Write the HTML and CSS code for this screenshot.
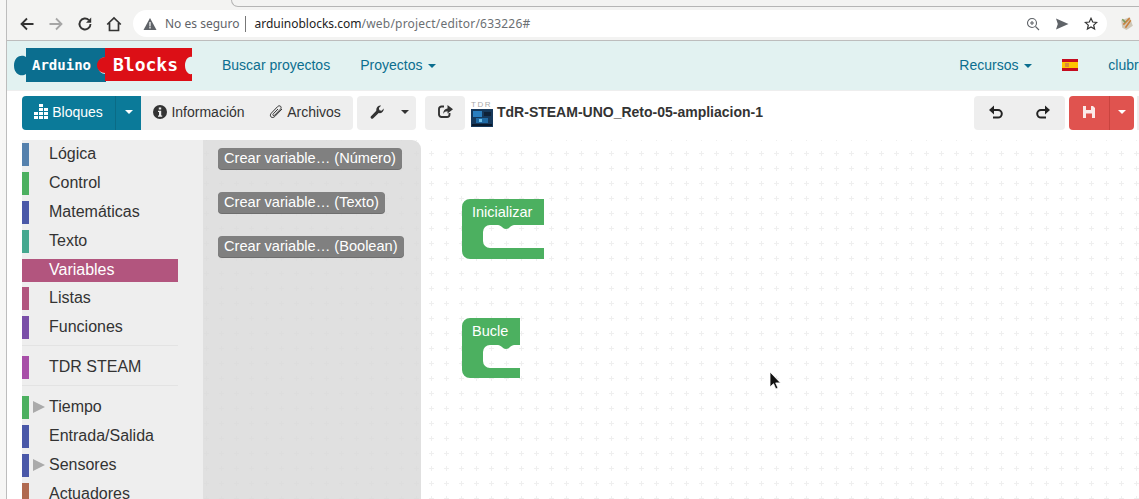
FILE: index.html
```html
<!DOCTYPE html>
<html lang="es">
<head>
    <meta charset="UTF-8">
    <meta name="viewport" content="width=device-width, initial-scale=1.0">
    <title>ArduinoBlocks</title>
    <link rel="stylesheet" href="styles.css">
</head>
<body>
    <div class="window">
        <!-- browser chrome -->
        <div class="tabStrip"><div class="tabEdge"></div></div>
        <div class="browserBar">
            <svg class="chromeIcon" viewBox="0 0 16 16"><path d="M14.500 8H2.500M8 2.500L2.500 8 8 13.500" fill="none" stroke="#333" stroke-width="1.800"/></svg>
            <svg class="chromeIcon" viewBox="0 0 16 16"><path d="M1.500 8h12M8 2.500L13.500 8 8 13.500" fill="none" stroke="#a6a6a6" stroke-width="1.800"/></svg>
            <svg class="chromeIcon" viewBox="0 0 16 16"><path d="M13.500 8a5.500 5.500 0 1 1-1.600-3.900" fill="none" stroke="#333" stroke-width="1.900"/><path d="M14.200 1.500v5.200H9z" fill="#333"/></svg>
            <svg class="chromeIcon" viewBox="0 0 16 16"><path d="M1.200 8.500L8 2l6.800 6.500M3.500 7v7.500h9V7" fill="none" stroke="#333" stroke-width="1.700"/></svg>
            <div class="addressBar">
                <svg class="warnIcon" viewBox="0 0 14 14"><path d="M7 1l6.500 12H.5z" fill="#5f6368"/><path d="M6.400 5h1.200v4.400H6.400zM6.400 10h1.200v1.400H6.400z" fill="#fff"/></svg>
                <span class="secure">No es seguro</span>
                <span class="urlHost">arduinoblocks.com<span class="urlPath">/web/project/editor/633226#</span></span>
                <svg class="omniIcon" viewBox="0 0 14 14"><circle cx="6" cy="6" r="4.500" fill="none" stroke="#5f6368" stroke-width="1.100"/><path d="M9.500 9.500L13 13M4 6h4M6 4v4" stroke="#5f6368" stroke-width="1.100"/></svg>
                <svg class="omniIcon" viewBox="0 0 14 14"><path d="M1 1.500L13.500 7 1 12.500l1.800-5.500z" fill="#5f6368"/></svg>
                <svg class="omniIcon" viewBox="0 0 14 14"><path d="M7 1.300l1.700 3.700 4 .4-3 2.700.9 4L7 10l-3.600 2.100.9-4-3-2.700 4-.4z" fill="none" stroke="#333" stroke-width="1.200"/></svg>
            </div>
            <svg class="extIcon" viewBox="0 0 16 16"><path d="M3 5l8-3 3 8-6 4-4-2z" fill="#cfc7b8"/><path d="M5 9l6-6M7 12l5-7" stroke="#c9803c" stroke-width="1.500"/><path d="M4 4l3 3" stroke="#7a9a5a" stroke-width="1.500"/></svg>
        </div>

        <nav class="navbar">
            <svg class="logo" viewBox="0 0 180 36">
                <path d="M13 1h80v9c-5 0-8 3.500-8 8.500s3 8.500 8 8.500v8H13v-8c-4 3-12 1-12-8.500S9 7 13 10z" fill="#0b6e8f"/>
                <path d="M92 1h87v9c-4-1-7 3.500-7 8.500s3 9.500 7 8.500v7H92v-8c-4 0-8-3-8-7.500s4-8.500 8-8.500z" fill="#dc0f16"/>
                <text class="logoText" x="19" y="23">Arduino</text>
                <text class="logoText big" x="100" y="24">Blocks</text>
            </svg>
            <a class="navLink firstLink">Buscar proyectos</a>
            <a class="navLink">Proyectos <span class="caret"></span></a>
            <a class="navLink recursos">Recursos <span class="caret"></span></a>
            <svg class="flag" viewBox="0 0 16 12"><rect width="16" height="12" fill="#c60b1e"/><rect y="3" width="16" height="6" fill="#ffc400"/><rect x="3" y="4" width="4" height="4" fill="#d98a3a"/></svg>
            <a class="navLink">clubrobotica</a>
        </nav>

        <div class="toolbar">
            <div class="btnGroup">
                <button class="btn primary">
                    <svg class="blockIcon" viewBox="0 0 14 15"><path d="M5 0h4v3H5zM5 4h4v3H5zM0 8h4v3H0zM5 8h4v3H5zM10 8h4v3h-4zM0 12h4v3H0zM5 12h4v3H5zM10 12h4v3h-4zM10 4h4v3h-4z" fill="#fff"/></svg>
                    Bloques
                </button>
                <button class="btn primary splitCaret"><span class="caret"></span></button>
                <button class="btn infoBtn">
                    <svg class="btnIcon" viewBox="0 0 14 14"><circle cx="7" cy="7" r="7" fill="#333"/><path d="M5.800 2.500h2.400v2.100H5.800zM5 5.800h3.200v4.600h1v1.300H5v-1.300h1V7.100H5z" fill="#eee"/></svg>
                    Información
                </button>
                <button class="btn fileBtn">
                    <svg class="btnIcon" viewBox="0 0 14 14"><path d="M13 4L5.800 11.500c-1.200 1.200-2.900 1.300-3.800.4S1.100 9.400 2.300 8.200L8.600 1.600c.9-.9 2.200-1 3-.3s.6 2.100-.3 3L5.700 10.200c-.5.500-1.200.6-1.600.2s-.3-1.100.2-1.600L9 4" fill="none" stroke="#333" stroke-width="1"/></svg>
                    Archivos
                </button>
            </div>
            <div class="btnGroup">
                <button class="btn wrench">
                    <svg class="btnIcon" viewBox="0 0 14 14"><path d="M.8 11.500L6.300 5.700C5.900 3 8 .3 11.200.6L8.900 3l.5 2.200 2.200.5L13.700 3.400c.4 3.300-2.500 5.300-5 4.700L3 13.500c-1.300 1-3.100-.6-2.200-2z" fill="#333"/></svg>
                </button>
                <button class="btn wrenchCaret"><span class="caret"></span></button>
            </div>
            <div class="btnGroup shareGroup">
                <button class="btn share">
                    <svg class="shareIcon" viewBox="0 0 15 13"><path d="M6 1.500H3.500A2.500 2.500 0 0 0 1 4v5.500A2.500 2.500 0 0 0 3.500 12H9a2.500 2.500 0 0 0 2.500-2.500V8" fill="none" stroke="#333" stroke-width="1.900"/><path d="M9.500 0L15 4.300 9.500 8.500V6.300C7.500 6.300 6.200 7 5.200 9c0-3.500 1.800-5.300 4.300-5.500z" fill="#333"/></svg>
                </button>
            </div>
            <div class="projectIcon">
                <span class="projectTdr">TDR</span>
                <svg class="projectPic" viewBox="0 0 22 18"><rect width="22" height="18" fill="#16395c"/><rect x="2" y="2" width="9" height="6" fill="#2a7fc0"/><rect x="13" y="3" width="7" height="4" fill="#0f2238"/><rect x="5" y="9" width="12" height="5" fill="#1f6aa5"/><rect x="8" y="10" width="3" height="3" fill="#6fc0e8"/><rect x="1" y="15" width="20" height="2" fill="#0a1a2c"/></svg>
            </div>
            <b class="projectName">TdR-STEAM-UNO_Reto-05-ampliacion-1</b>
            <div class="btnGroup undoGroup">
                <button class="btn history">
                    <svg class="historyIcon" viewBox="0 0 15 14"><path d="M3 5h6a3.800 3.800 0 0 1 0 7.600H4" fill="none" stroke="#222" stroke-width="2"/><path d="M5 .5v9L0 5z" fill="#222"/></svg>
                </button>
                <button class="btn history">
                    <svg class="historyIcon" viewBox="0 0 15 14"><path d="M12 5H6a3.800 3.800 0 0 0 0 7.600h5" fill="none" stroke="#222" stroke-width="2"/><path d="M10 .5v9L15 5z" fill="#222"/></svg>
                </button>
            </div>
            <div class="btnGroup">
                <button class="btn danger">
                    <svg class="btnIcon" viewBox="0 0 14 14"><path d="M1 1h10l2 2v10H1z" fill="#fbe9e8"/><path d="M4 1h5v4H4zM4 8.500h6V13H4z" fill="#e0534f"/></svg>
                </button>
                <button class="btn danger splitDanger"><span class="caret"></span></button>
            </div>
            <div class="sliver"></div>
        </div>

        <div class="editor">
            <ul class="tree">
                <li class="cat"><i class="swatch blue"></i>Lógica</li>
                <li class="cat"><i class="swatch green"></i>Control</li>
                <li class="cat"><i class="swatch indigo"></i>Matemáticas</li>
                <li class="cat"><i class="swatch teal"></i>Texto</li>
                <li class="cat selected"><i class="swatch rose"></i>Variables</li>
                <li class="cat"><i class="swatch rose"></i>Listas</li>
                <li class="cat"><i class="swatch violet"></i>Funciones</li>
                <li class="sep"></li>
                <li class="cat"><i class="swatch magenta"></i>TDR STEAM</li>
                <li class="sep"></li>
                <li class="cat"><i class="swatch green"></i><i class="arrow"></i>Tiempo</li>
                <li class="cat"><i class="swatch indigo"></i>Entrada/Salida</li>
                <li class="cat"><i class="swatch indigo"></i><i class="arrow"></i>Sensores</li>
                <li class="cat"><i class="swatch brown"></i>Actuadores</li>
            </ul>
            <div class="canvas">
                <svg class="blocks" viewBox="203 140 936 359">
                    <defs>
                        <pattern id="dots" x="444" y="196" width="15" height="15" patternUnits="userSpaceOnUse">
                            <path d="M0 2.500h5M2.500 0v5" stroke="#efefef" stroke-width="1"/>
                        </pattern>
                    </defs>
                    <rect x="203" y="140" width="936" height="359" fill="url(#dots)"/>
                    <path class="block" d="M470 199H544V225H514c-3 0-5 4-8 4s-5-4-8-4H490a7 7 0 0 0-7 7v9a7 7 0 0 0 7 7H544V259H470a8 8 0 0 1-8-8V207a8 8 0 0 1 8-8z"/>
                    <text class="blockText" x="472" y="217">Inicializar</text>
                    <path class="block" d="M470 318H520V345H514c-3 0-5 4-8 4s-5-4-8-4H490a7 7 0 0 0-7 7v9a7 7 0 0 0 7 7H520V378H470a8 8 0 0 1-8-8V326a8 8 0 0 1 8-8z"/>
                    <text class="blockText" x="472" y="336">Bucle</text>
                    <path d="M770 372v15l3.500-3.300 2.300 5.300 2.200-1-2.300-5.100h4.800z" fill="#111" stroke="#fff" stroke-width=".8"/>
                </svg>
                <div class="flyout">
                    <button class="flyBtn">Crear variable… (Número)</button>
                    <button class="flyBtn">Crear variable… (Texto)</button>
                    <button class="flyBtn">Crear variable… (Boolean)</button>
                </div>
            </div>
        </div>
    </div>
</body>
</html>
```

FILE: styles.css
```css
html, body {
    height: 100%;
}
body {
    margin: 0;
    overflow: hidden;
    background: #f6f6f5;
    font-family: "Liberation Sans", sans-serif;
    color: #333;
}
.window {
    margin-left: 6px;
    height: 499px;
    border-left: 1px solid #bdbdbd;
    background: white;
    display: flex;
    flex-direction: column;
    overflow: hidden;
}

/* browser chrome */
.tabStrip {
    height: 7px;
    background: #f3f3f2;
    flex-shrink: 0;
}
.tabEdge {
    margin-left: 224px;
    height: 6px;
    border-left: 1px solid #b5b5b5;
    border-bottom: 1px solid #b5b5b5;
    border-bottom-left-radius: 7px;
}
.browserBar {
    height: 34px;
    flex-shrink: 0;
    box-sizing: border-box;
    background: #f3f3f2;
    border-bottom: 1px solid #bdbdbd;
    display: flex;
    align-items: center;
    padding-left: 12px;
}
.chromeIcon {
    width: 16px;
    height: 16px;
    margin-right: 13px;
    flex-shrink: 0;
}
.addressBar {
    margin-left: -2px;
    width: 974px;
    height: 27px;
    flex-shrink: 0;
    box-sizing: border-box;
    background: white;
    border-radius: 14px;
    display: flex;
    align-items: center;
    padding-left: 10px;
    font-family: "Noto Sans", sans-serif;
    font-size: 12px;
}
.warnIcon {
    width: 14px;
    height: 14px;
    margin-right: 8px;
}
.secure {
    color: #5f6368;
    font-size: 12px;
    padding-right: 6px;
    border-right: 1px solid #777;
    line-height: 16px;
    margin-right: 8px;
}
.urlHost {
    color: #222;
    flex: 1;
}
.urlPath {
    color: #6b6f73;
    letter-spacing: 0.2px;
}
.omniIcon {
    width: 14px;
    height: 14px;
    margin-right: 15px;
}
.omniIcon:last-child {
    margin-right: 9px;
}
.extIcon {
    width: 17px;
    height: 17px;
    margin-left: 11px;
    flex-shrink: 0;
}

/* site navbar */
.navbar {
    height: 49px;
    flex-shrink: 0;
    box-sizing: border-box;
    background: #e2f2f1;
    display: flex;
    align-items: center;
    padding: 0 0 1px 6px;
    font-size: 14px;
    white-space: nowrap;
}
.logo {
    width: 180px;
    height: 36px;
    flex-shrink: 0;
}
.logoText {
    font-family: "DejaVu Sans Mono", monospace;
    font-weight: bold;
    font-size: 14px;
    fill: white;
}
.logoText.big {
    font-size: 18px;
}
.navLink {
    color: #0b6e8f;
    margin-left: 30px;
    flex-shrink: 0;
}
.firstLink {
    margin-left: 29px;
}
.recursos {
    margin-left: 523px;
}
.flag {
    width: 16px;
    height: 12px;
    margin-left: 30px;
    flex-shrink: 0;
}
.caret {
    display: inline-block;
    width: 0;
    height: 0;
    margin-left: 2px;
    vertical-align: middle;
    border-top: 4px solid;
    border-left: 4px solid transparent;
    border-right: 4px solid transparent;
}

/* editor toolbar */
.toolbar {
    height: 50px;
    flex-shrink: 0;
    box-sizing: border-box;
    border-top: 1px solid #eee;
    padding: 5px 0 10px 15px;
    display: flex;
    font-size: 14px;
}
.btnGroup {
    display: flex;
    margin-right: 4px;
    border-radius: 4px;
    overflow: hidden;
    flex-shrink: 0;
}
.btn {
    border: 0;
    padding: 0 0 3px;
    height: 34px;
    background: #eeeeee;
    color: #333;
    font: inherit;
    display: flex;
    align-items: center;
    justify-content: center;
    gap: 4px;
}
.btn .caret {
    margin: 0;
}
.btnIcon {
    width: 14px;
    height: 14px;
}
.blockIcon {
    width: 14px;
    height: 15px;
}
.shareIcon {
    width: 15px;
    height: 13px;
}
.historyIcon {
    width: 15px;
    height: 14px;
}
.primary {
    background: #0b7a99;
    color: white;
    width: 93px;
}
.splitCaret {
    width: 26px;
    border-left: 1px solid #0a6b86;
}
.infoBtn {
    width: 116px;
}
.fileBtn {
    width: 96px;
}
.wrench {
    width: 40px;
}
.wrenchCaret {
    width: 19px;
    padding-right: 3px;
}
.shareGroup {
    margin-left: 5px;
}
.share {
    width: 40px;
}
.projectIcon {
    width: 22px;
    margin-left: 2px;
    display: flex;
    flex-direction: column;
    padding-top: 5px;
    flex-shrink: 0;
}
.projectTdr {
    font-size: 8px;
    line-height: 8px;
    letter-spacing: 1.500px;
    color: #aaa;
}
.projectPic {
    width: 22px;
    height: 18px;
}
.projectName {
    margin-left: 4px;
    font-size: 14px;
    line-height: 33px;
    width: 265px;
    white-space: nowrap;
    flex-shrink: 0;
}
.undoGroup {
    margin-left: 212px;
}
.history {
    width: 45.500px;
}
.danger {
    background: #e0534f;
    width: 40px;
    color: white;
}
.splitDanger {
    width: 25px;
    border-left: 1px solid #c9443f;
}
.sliver {
    width: 8px;
    height: 34px;
    background: #eee;
    flex-shrink: 0;
    margin-left: -1px;
}

/* blocks */
.editor {
    flex: 1;
    display: flex;
    padding-left: 15px;
    min-height: 0;
}
.tree {
    list-style: none;
    margin: 0;
    padding: 3px 25px 0 0;
    width: 156px;
    flex-shrink: 0;
    background: #eeeeee;
    overflow: hidden;
    font-size: 16px;
    color: #333;
}
.cat {
    height: 23px;
    line-height: 22px;
    margin-bottom: 5.900px;
    display: flex;
    position: relative;
    padding-left: 27px;
}
.swatch {
    width: 7px;
    height: 23px;
    position: absolute;
    left: 0;
    top: 0;
}
.selected {
    background: #b2557e;
    color: white;
}
.blue { background: #5581ad; }
.green { background: #4cb060; }
.indigo { background: #4a58a8; }
.teal { background: #45a88f; }
.rose { background: #b2557e; }
.violet { background: #7a4fa8; }
.magenta { background: #a84fa8; }
.brown { background: #b0694f; }
.arrow {
    position: absolute;
    left: 11px;
    top: 5px;
    border-left: 12px solid #aaa;
    border-top: 6.500px solid transparent;
    border-bottom: 6.500px solid transparent;
}
.sep {
    height: 0;
    border-top: 1px solid #e3e3e3;
    margin: 2px 0 10px;
}
.canvas {
    flex: 1;
    position: relative;
    overflow: hidden;
    background: white;
}
.blocks {
    position: absolute;
    left: 0;
    top: 0;
    width: 936px;
    height: 359px;
}
.block {
    fill: #4cb060;
}
.blockText {
    font-size: 14.500px;
    fill: white;
}
.flyout {
    position: absolute;
    left: 0;
    top: 0;
    width: 218px;
    height: 100%;
    box-sizing: border-box;
    background: rgba(216, 216, 216, 0.8);
    border-top-right-radius: 9px;
    padding: 8px 15px;
    display: flex;
    flex-direction: column;
    align-items: flex-start;
    gap: 23px;
}
.flyBtn {
    height: 21px;
    padding: 0 6px 2px;
    border: 0;
    border-radius: 4px;
    background: #808080;
    box-shadow: 0 1px 0 #6e6e6e;
    color: white;
    font-family: "Liberation Sans", sans-serif;
    font-size: 14.600px;
    white-space: nowrap;
}
```
